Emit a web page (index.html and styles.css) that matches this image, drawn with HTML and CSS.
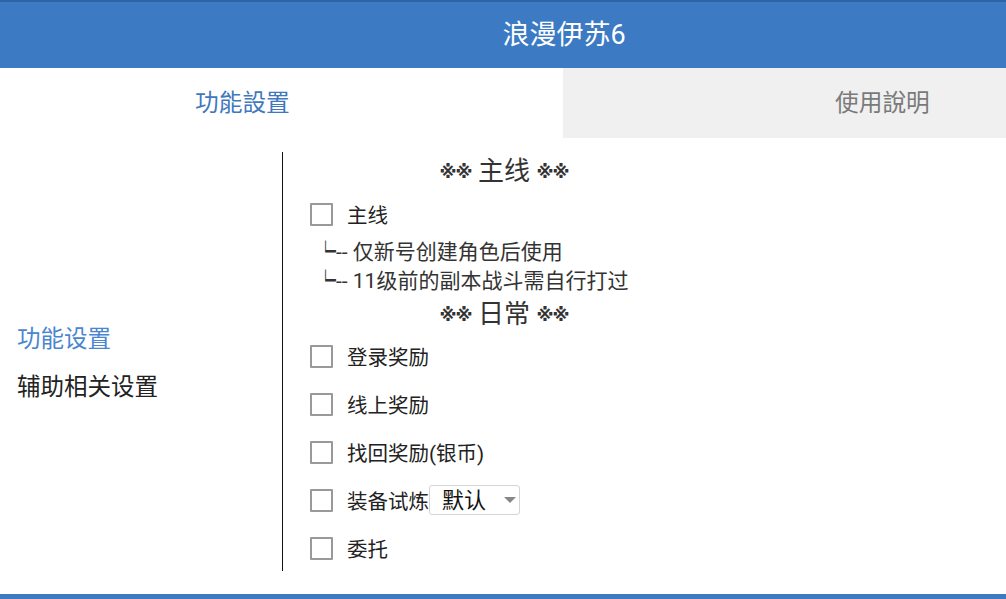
FILE: index.html
```html
<!DOCTYPE html>
<html>
<head>
    <meta charset="UTF-8">
    <title>浪漫伊苏6</title>
    <link rel="stylesheet" href="styles.css">
</head>
<body>

<div class="header">浪漫伊苏6</div>

<div class="tabs">
    <div class="tab on">功能設置</div>
    <div class="tab">使用說明</div>
</div>

<div class="page">
    <div class="side">
        <div class="side-item on">功能设置</div>
        <div class="side-item">辅助相关设置</div>
    </div>
    <div class="main">
        <div class="title"><span class="mark">※※</span> 主线 <span class="mark">※※</span></div>
        <label class="row"><input type="checkbox"><span>主线</span></label>
        <div class="note">┕-- 仅新号创建角色后使用</div>
        <div class="note">┕-- 11级前的副本战斗需自行打过</div>
        <div class="title short"><span class="mark">※※</span> 日常 <span class="mark">※※</span></div>
        <label class="row"><input type="checkbox"><span>登录奖励</span></label>
        <label class="row"><input type="checkbox"><span>线上奖励</span></label>
        <label class="row"><input type="checkbox"><span>找回奖励(银币)</span></label>
        <div class="row">
            <input type="checkbox"><span>装备试炼</span>
            <div class="select">
                <select>
                    <option>默认</option>
                </select>
            </div>
        </div>
        <label class="row"><input type="checkbox"><span>委托</span></label>
    </div>
</div>

<div class="footer"></div>

</body>
</html>
```

FILE: styles.css
```css
*{ margin: 0; padding: 0; box-sizing: border-box;}
html, body { height: 100%; overflow: hidden;}
body { font-family: Roboto, "Noto Sans CJK SC", sans-serif; color: #222; background: #fff;}

.header { height: 68px; line-height: 66px; padding-left: 122px; text-align: center; font-size: 27px; color: #fff; background: #3d7ac4; border-top: 2px solid #2f62a6;}

.tabs { display: grid; grid-template-columns: 563px 1fr; height: 68px;}
.tab { line-height: 70px; font-size: 23.7px; color: #7a7a7a; background: #f0f0f0; padding-left: 272px; font-family: Roboto, "Noto Sans CJK TC", sans-serif;}
.tab.on { color: #3f78bd; background: #fff; padding-left: 195px;}

.page { display: flex; margin-top: 16px; height: 419px;}
.side { width: 283px; border-right: 1px solid #111; display: flex; flex-direction: column; justify-content: center; padding: 2px 0 0 17px;}
.side-item { line-height: 48px; font-size: 23.5px; color: #222;}
.side-item.on { color: #4a86d0;}

.main { width: 442px; padding-left: 27px;}
.title { height: 38px; line-height: 38px; text-align: center; font-size: 26px; color: #333; padding-right: 27px;}
.title .mark { font-family: "DejaVu Sans", sans-serif; font-size: 17.5px; font-weight: bold; letter-spacing: -1px; vertical-align: 2px;}
.title.short { height: 36px; line-height: 36px;}
.row { display: flex; align-items: center; height: 48px; font-size: 20.5px; color: #222;}
.row input { appearance: none; -webkit-appearance: none; width: 23px; height: 23px; border: 2px solid #999; border-radius: 1px; background: #fff; margin-right: 14px;}
.note { height: 29px; line-height: 29px; font-size: 21px; color: #333; padding-left: 5px;}

.select { position: relative; width: 91px; height: 30px;}
.select select { appearance: none; -webkit-appearance: none; width: 100%; height: 100%; border: 1px solid #d4d4d4; border-radius: 3px; background: #fff; font-family: Roboto, "Noto Sans CJK SC", sans-serif; font-size: 22px; color: #111; padding-left: 12px; outline: none;}
.select:after { content: ""; position: absolute; right: 4px; top: 12px; border-left: 6px solid transparent; border-right: 6px solid transparent; border-top: 6px solid #888; pointer-events: none;}

.footer { margin-top: 23px; height: 10px; background: #3d7ac4;}
```
